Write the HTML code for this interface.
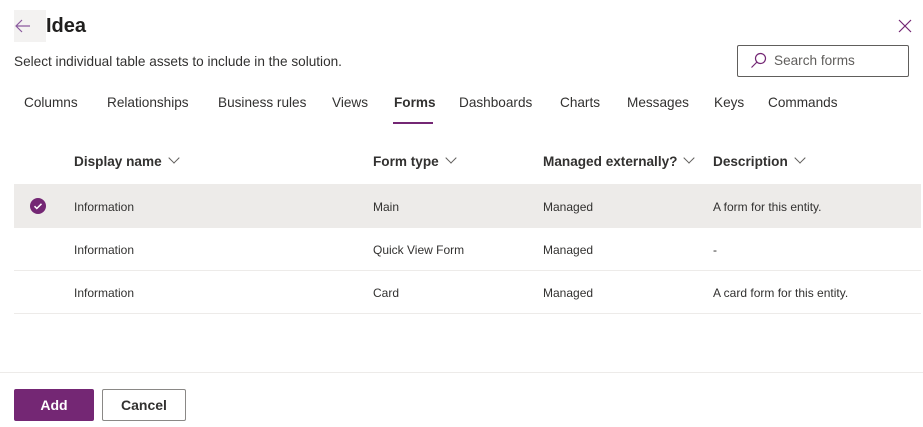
<!DOCTYPE html>
<html><head><style>
body{margin:0;width:923px;height:427px;background:#fff;font-family:"Liberation Sans",sans-serif;color:#323130;position:relative;overflow:hidden}
.a{position:absolute;white-space:nowrap}
.tab{position:absolute;top:95px;font-size:13.6px;color:#323130}
.hd{position:absolute;top:154px;font-size:13.6px;font-weight:bold;color:#323130}
.cell{position:absolute;font-size:12px;color:#323130}
.row{position:absolute;left:14px;width:907px;height:43px;border-bottom:1px solid #edebe9}
.chev{display:inline-block;width:7px;height:7px;border-right:1px solid #605e5c;border-bottom:1px solid #605e5c;transform:rotate(45deg);margin-left:8px;position:relative;top:-4px}
</style></head><body>
<div class="a" style="left:14px;top:10px;width:32px;height:32px;background:#f3f2f1"></div>
<svg class="a" style="left:14px;top:17px" width="18" height="18" viewBox="0 0 18 18"><path d="M16 9H2M8 3L2 9l6 6" stroke="#8a5a9e" stroke-width="1.2" fill="none"/></svg>
<div class="a" style="left:46px;top:15px;font-size:20px;font-weight:bold;color:#201f1e">Idea</div>
<svg class="a" style="left:898px;top:19px" width="14" height="14"><path d="M1 1L13 13M13 1L1 13" stroke="#742774" stroke-width="1.2"/></svg>
<div class="a" style="left:14px;top:54px;font-size:13.6px">Select individual table assets to include in the solution.</div>
<div class="a" style="left:737px;top:45px;width:170px;height:30px;border:1px solid #605e5c;border-radius:2px"></div>
<svg class="a" style="left:750px;top:52px" width="17" height="17"><circle cx="10.5" cy="6.5" r="5" stroke="#742774" stroke-width="1.2" fill="none"/><path d="M7 10L1.5 15.5" stroke="#742774" stroke-width="1.2"/></svg>
<div class="a" style="left:774px;top:53px;font-size:13.6px;color:#605e5c">Search forms</div>
<div class="tab" style="left:24px">Columns</div>
<div class="tab" style="left:107px">Relationships</div>
<div class="tab" style="left:218px">Business rules</div>
<div class="tab" style="left:332px">Views</div>
<div class="tab" style="left:394px;font-weight:bold">Forms</div>
<div class="a" style="left:393px;top:122px;width:40px;height:2px;background:#742774"></div>
<div class="tab" style="left:459px">Dashboards</div>
<div class="tab" style="left:560px">Charts</div>
<div class="tab" style="left:627px">Messages</div>
<div class="tab" style="left:714px">Keys</div>
<div class="tab" style="left:768px">Commands</div>
<div class="hd" style="left:74px">Display name<span class="chev"></span></div>
<div class="hd" style="left:373px">Form type<span class="chev"></span></div>
<div class="hd" style="left:543px">Managed externally?<span class="chev"></span></div>
<div class="hd" style="left:713px">Description<span class="chev"></span></div>
<div class="row" style="top:184px;background:#edebe9"></div>
<div class="row" style="top:227px"></div>
<div class="row" style="top:270px"></div>
<svg class="a" style="left:29px;top:197px" width="18" height="18"><circle cx="9" cy="9" r="8" fill="#742774"/><path d="M5.5 9.2l2.3 2.3 4.7-4.7" stroke="#fff" stroke-width="1.5" fill="none"/></svg>
<div class="cell" style="left:74px;top:200px">Information</div>
<div class="cell" style="left:373px;top:200px">Main</div>
<div class="cell" style="left:543px;top:200px">Managed</div>
<div class="cell" style="left:713px;top:200px">A form for this entity.</div>
<div class="cell" style="left:74px;top:243px">Information</div>
<div class="cell" style="left:373px;top:243px">Quick View Form</div>
<div class="cell" style="left:543px;top:243px">Managed</div>
<div class="cell" style="left:713px;top:243px">-</div>
<div class="cell" style="left:74px;top:286px">Information</div>
<div class="cell" style="left:373px;top:286px">Card</div>
<div class="cell" style="left:543px;top:286px">Managed</div>
<div class="cell" style="left:713px;top:286px">A card form for this entity.</div>
<div class="a" style="left:0;top:372px;width:923px;height:1px;background:#edebe9"></div>
<div class="a" style="left:14px;top:389px;width:80px;height:32px;background:#742774;border-radius:2px;color:#fff;font-size:14px;font-weight:bold;text-align:center;line-height:32px">Add</div>
<div class="a" style="left:102px;top:389px;width:82px;height:30px;border:1px solid #8a8886;border-radius:2px;font-size:14px;font-weight:bold;text-align:center;line-height:30px;color:#323130">Cancel</div>
</body></html>
